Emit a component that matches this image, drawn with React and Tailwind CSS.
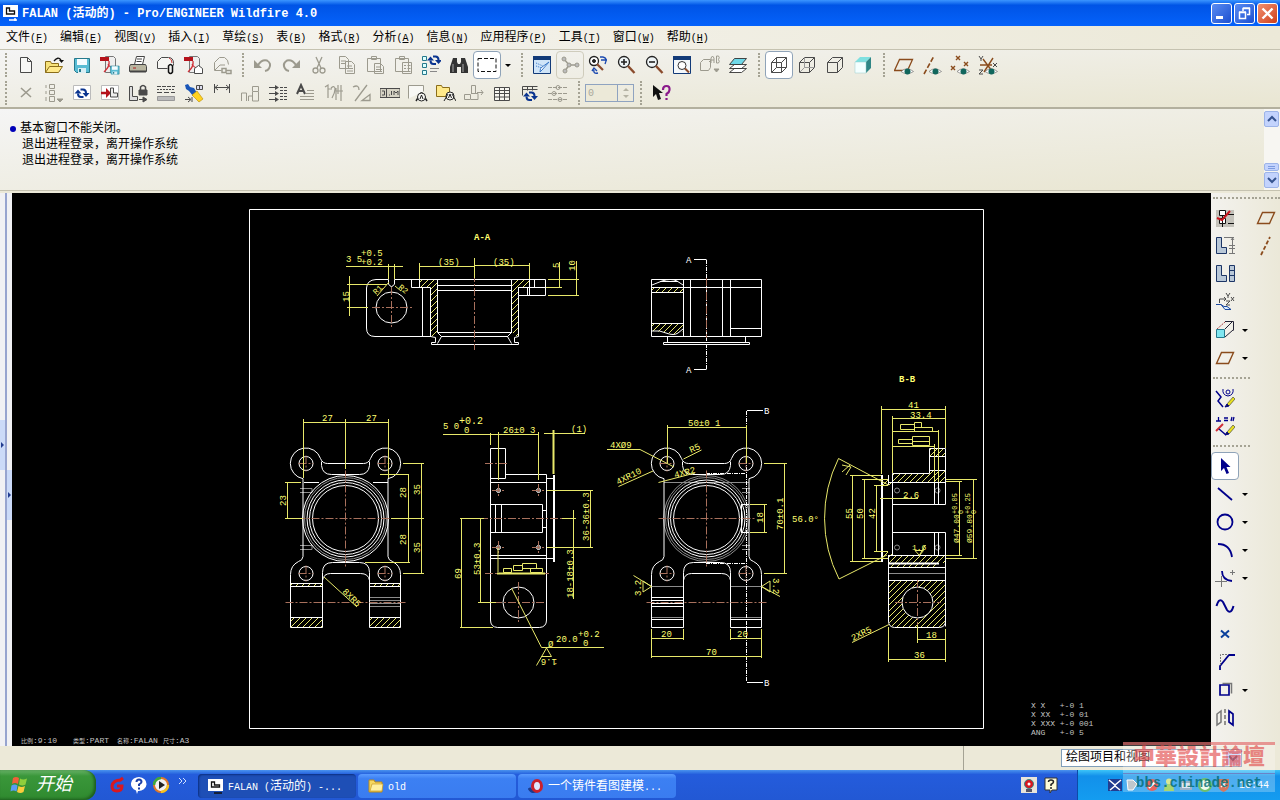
import React, { useState } from 'react';

const D = '#4a4a4a';
const G = '#9c9a8e';
const N = '#00008b';
const B = '#8a4b1c';

const mono = "font-['Liberation_Mono','Noto_Sans_CJK_SC',monospace]";

/* Small drawings shared by several icons */
const Eye = () => (
  <g>
    <path d="M7 16.500Q13 11 19.500 16.500Q13 21 7 16.500Z" fill="#fff" stroke="#777" strokeWidth="0.700" />
    <circle cx="13.500" cy="16.500" r="3" fill="#10665c" />
  </g>
);

const Sheet = ({ x = 0, y = 0, c = D }) => (
  <path d={`M${x + 4.5} ${y + 2.5}h7l4 4v11h-11zM${x + 11.5} ${y + 2.5}v4h4`} fill="#f8f8f6" stroke={c} />
);

const Pdf = () => (
  <g>
    <path d="M5.500 1.500h8l2 2v14h-10z" fill="#eee" stroke="#777" />
    <path d="M0 2h9v4H0z" fill="#b5121b" />
    <path d="M9 6C10 12 6 15 4 17M8 9q3 5 7 4" fill="none" stroke="#d03038" strokeWidth="1.300" />
  </g>
);

const Floppy = () => (
  <g>
    <path d="M2.500 3.500h15v14h-13l-2-2z" fill="#58bcd4" stroke="#26798c" />
    <path d="M5 4h10v6H5z" fill="#f4fcff" />
    <path d="M6 13h8v5H6z" fill="#d8eef4" />
    <path d="M7 14h2v3H7z" fill="#26798c" />
  </g>
);

const Sync = ({ x = 0, y = 0 }) => (
  <g transform={`translate(${x} ${y})`} fill="none" stroke="#0a3490" strokeWidth="2">
    <path d="M6 4.500h2.500q3 0 3 3.500M9 12H6.500q-3 0-3-3.500" />
    <path d="M8 8h7l-3.500 4zM7 8.500H0l3.500-4z" fill="#0a3490" stroke="none" />
  </g>
);

const Cube = ({ fill = 'none', hidden, c = D }) => (
  <g fill={fill} stroke={c}>
    <path d="M2.500 7.500h10v10h-10zM2.500 7.500l5-5h10v10l-5 5M12.500 7.500l5-5" />
    {hidden && <path d="M7.500 2.500v10h10M2.500 17.500l5-5" fill="none" stroke={hidden} />}
  </g>
);

const Lens = ({ sign }) => (
  <g fill="none" stroke="#222">
    <circle cx="8" cy="7" r="5.500" fill="#eef4f6" strokeWidth="1.300" />
    {sign && <path d={sign} strokeWidth="1.600" />}
    <path d="M12 11l6.500 7" stroke="#8a4b2c" strokeWidth="2.400" />
  </g>
);

const Pencil = () => (
  <g>
    <path d="M12 16l6-7 2 2-6 7z" fill="#e8e020" stroke="#333" strokeWidth="0.600" />
    <path d="M10 19l2-3 2 2z" fill="#222" />
  </g>
);

const icons = {
  new: <Sheet />,
  open: (
    <g>
      <path d="M1.500 17.500v-11h5l1 2h7v3" fill="#f7e27a" stroke="#8a6d1a" />
      <path d="M1.500 17.500l4-6h13l-4 6z" fill="#ffe98a" stroke="#8a6d1a" />
      <path d="M10 6q4-5 7-1" fill="none" stroke="#111" strokeWidth="1.300" />
      <path d="M15 5h5l-2.500 3z" fill="#111" />
    </g>
  ),
  save: <Floppy />,
  savePdf: (
    <g>
      <Pdf />
      <g transform="translate(9 9) scale(.58)"><Floppy /></g>
    </g>
  ),
  print: (
    <g stroke="#444">
      <path d="M6.500 9.500l2-8h8l-2 8" fill="#fff" />
      <path d="M9 4h5M8.500 6.500h5" />
      <path d="M2.500 9.500h15l1 2v5h-17v-5z" fill="#b8b5a0" />
      <path d="M2 16.500h16" strokeWidth="2" />
      <path d="M5 13h3" stroke="#b02020" />
    </g>
  ),
  mail: (
    <g fill="none" stroke={D}>
      <path d="M1.500 13.500v-7l4-4h7q5 0 5 6v2M1.500 13.500h10" fill="#f5f5f2" />
      <path d="M13 3q3 1 3 5" stroke="#d04040" />
      <path d="M12.500 11v6q2 3 4 0v-6q-2-3-4 0v5" stroke="#111" strokeWidth="1.500" />
    </g>
  ),
  mailPdf: (
    <g>
      <Pdf />
      <path d="M10.500 18.500v-5l4-3 4 3v5z" fill="#fff" stroke={D} />
    </g>
  ),
  mailLink: (
    <g fill="none" stroke={G}>
      <path d="M2.500 15.500v-8l5-5h5q4 2 4 7M2.500 15.500h7M3 15l5-5h5" />
      <path d="M10 13.500h4v4h-4zM14 15.500h5v3h-5" strokeWidth="1.500" />
    </g>
  ),
  undo: (
    <g fill="none" stroke={G} strokeWidth="2">
      <path d="M5 10Q9 4 14 5.500q5 3 2 8-1 2-4 2.500" />
      <path d="M1 5v8h8z" fill={G} stroke="none" />
    </g>
  ),
  redo: (
    <g fill="none" stroke={G} strokeWidth="2">
      <path d="M15 10Q11 4 6 5.500q-5 3-2 8 1 2 4 2.500" />
      <path d="M19 5v8h-8z" fill={G} stroke="none" />
    </g>
  ),
  cut: (
    <g fill="none" stroke={G} strokeWidth="1.300">
      <path d="M7 2l5 11M13 2L8 13" />
      <circle cx="6.500" cy="15.500" r="2.500" />
      <circle cx="13.500" cy="15.500" r="2.500" />
    </g>
  ),
  copy: (
    <g fill="#f1f0ea" stroke={G}>
      <path d="M2.500 1.500h6l3 3v9h-9zM8.500 6.500h6l3 3v9h-9z" />
      <path d="M4 6h5M4 8.500h4M10 11h5M10 13.500h6M10 16h6" />
    </g>
  ),
  paste: (
    <g fill="#f1f0ea" stroke={G}>
      <path d="M2.500 3.500h13v13h-13zM6.500 1.500h5v3h-5zM9.500 8.500h6l3 3v7h-9z" />
      <path d="M11 12h4M11 14.500h6M11 16.500h6" />
    </g>
  ),
  pasteSpecial: (
    <g fill="#f1f0ea" stroke={G}>
      <path d="M2.500 3.500h13v13h-13zM6.500 1.500h5v3h-5zM9.500 7.500h9v11h-9z" />
      <path d="M11 10.500h2M14.500 10.500h3M11 13.500h2M14.500 13.500h3M11 16.500h2M14.500 16.500h3" />
    </g>
  ),
  regen: (
    <g>
      <path d="M1.500 1.500h4v4h-4zM1.500 8.500h4v4h-4zM1.500 15.500h4v4h-4z" fill="#dff" stroke="#26798c" />
      <Sync x={6} y={-3} />
      <path d="M9 13.500h9M9 16.500h7" stroke="#888" />
    </g>
  ),
  find: (
    <g fill="#333">
      <path d="M4 3h4v4l1 2h2l1-2V3h4l3 9v6h-7v-6h-4v6H1v-6z" />
      <path d="M4 9v8M14 9v8" stroke="#aaa" />
    </g>
  ),
  select: <path d="M1 3.500h18v13H1z" fill="none" stroke="#111" strokeDasharray="4 2" />,
  repaint: (
    <g>
      <path d="M1.500 1.500h17v17h-17z" fill="#cfe4f8" stroke="#123a78" />
      <path d="M1 1h18v4H1z" fill="#123a78" />
      <path d="M4 8l7 3M4 11l6 2" stroke="#3a78c8" strokeDasharray="1 1" />
      <path d="M17 7l-7 8-2 2q0-4 2-5z" fill="#fff" stroke="#3a78c8" />
    </g>
  ),
  spin: (
    <g fill="#bbb" stroke={G}>
      <path d="M4 4l5 6h7M9 10l-4 6" fill="none" strokeWidth="1.500" />
      <circle cx="4" cy="4" r="2" /><circle cx="17" cy="10" r="2" /><circle cx="5" cy="16" r="2" /><circle cx="9" cy="10" r="2" />
    </g>
  ),
  orient: (
    <g fill="none" stroke="#222">
      <circle cx="6" cy="6" r="4.500" fill="#fff" strokeWidth="1.300" />
      <circle cx="6" cy="6" r="1.500" fill="#222" />
      <path d="M9 9l6 6" stroke="#8a4b2c" strokeWidth="2.200" />
      <path d="M12 2h3M13 5h6M15 2q5 1 2 7" stroke="#1b49b0" strokeWidth="1.400" />
      <path d="M10 18q-5 1-4-3M4 16l2-3 3 3" stroke="#1b49b0" strokeWidth="1.400" />
    </g>
  ),
  zoomIn: <Lens sign="M5 7h6M8 4v6" />,
  zoomOut: <Lens sign="M5 7h6" />,
  refit: (
    <g>
      <path d="M1.500 1.500h17v17h-17z" fill="#f4f8fb" stroke="#123a78" />
      <path d="M1 1h18v4H1z" fill="#123a78" />
      <circle cx="10" cy="10.500" r="4" fill="#fff" stroke="#333" />
      <path d="M13 13.500l4 4" stroke="#8a4b2c" strokeWidth="2" />
    </g>
  ),
  views: (
    <g fill="none" stroke={G}>
      <path d="M.500 7.500l3-3h7v8l-2 3h-8zM9 7l2-2" />
      <path d="M11 8V3l1.500-2L14 3v5M11 5h3M16.500 1v7h2q1.500-1.500 0-3.500 1.500-2 0-3.500z" />
      <path d="M14 14h5l-2.500 3z" fill={G} />
    </g>
  ),
  layers: (
    <g stroke="#333" strokeWidth="0.900">
      <path d="M1.500 17.500l5-4h12l-5 4zM1.500 13.500l5-4h12l-5 4z" fill="#fff" />
      <path d="M1.500 9.500l5-6h12l-5 6z" fill="#6fd8e8" />
    </g>
  ),
  wire: <Cube hidden={D} />,
  hiddenLine: <Cube hidden="#999" />,
  noHidden: <Cube />,
  shaded: (
    <g>
      <path d="M2 7l5-5h11l-5 5z" fill="#7fe0e0" />
      <path d="M13 7l5-5v11l-5 5z" fill="#2f8585" />
      <path d="M2 7h11v11H2z" fill="#f4ffff" stroke="#9cc" strokeWidth=".500" />
    </g>
  ),
  planeEye: <g><path d="M.500 15.500l5-11h13l-5 11z" fill="none" stroke={B} strokeWidth="1.300" /><Eye /></g>,
  axisEye: <g><path d="M2 19L12 1" stroke={B} strokeWidth="1.600" strokeDasharray="5 2" /><Eye /></g>,
  pointEye: <g><path d="M6 1l4 4M10 1l-4 4M14 7l4 4M18 7l-4 4M1 11l4 4M5 11l-4 4" stroke={B} strokeWidth="1.400" /><Eye /></g>,
  csysEye: (
    <g>
      <path d="M2 10h12M5 4l9 12M15 3L6 17" stroke={B} strokeWidth="1.400" />
      <path d="M1 1l2 3 2-3M3 4v2M15 8l4 4M19 8l-4 4M1 15h4l-4 4h4" stroke={D} fill="none" />
      <Eye />
    </g>
  ),

  del: <path d="M5 5l10 9M15 5L5 14" stroke={G} strokeWidth="1.600" />,
  modelTree: <g fill="none" stroke={G}><path d="M5.500 1.500h5v4h-5zM5.500 7.500h5v4h-5zM5.500 13.500h5v5h-5zM2 2v3M2 8v3M2 14v4" /><path d="M13 16h6l-3 3z" fill={G} /></g>,
  updateSheet: <g><path d="M1.500 2.500h17v14h-17z" fill="#fff" stroke="#bbb" /><Sync x={2.5} y={2} /></g>,
  insertView: <g><path d="M1.500 2.500h17v14h-17z" fill="#fff" stroke="#bbb" /><path d="M1 10h8" stroke="#b5121b" strokeWidth="2.500" /><path d="M6 5l5 5-5 5z" fill="#b5121b" /><path d="M10.500 5v9h7v-4h-4v-5z" fill="#eee" stroke={D} /></g>,
  lockView: <g fill="none" stroke={D}><path d="M1.500 3.500h3v10h5v4h-8z" fill="#ddd" /><path d="M11 7h8v5h-8z" fill={D} /><path d="M12.500 7v-3q2.500-3 5 0v3" strokeWidth="1.500" /><path d="M11 16.500h5" /><path d="M15 14l4 2.500-4 2.500z" fill={D} /></g>,
  lineStyle: <g stroke={D}><path d="M1 3.500h18" strokeDasharray="4 1" /><path d="M1 6.500h18" strokeDasharray="2 1" /><path d="M1 9.500h18" strokeDasharray="5 2" /><path d="M1.500 13.500h17v4h-17z" fill="#bbb" stroke="#999" /></g>,
  wrench: (
    <g>
      <path d="M1 2l3-1 2 3 4 1 3 5-4 3-4-5-3-2z" fill="#1956b8" />
      <path d="M8 12l5-4 6 8-4 3z" fill="#ffd21f" stroke="#b98a00" strokeWidth=".600" />
      <path d="M12.500 2.500h6v4h-6zM15.500 2.500v4" fill="#dde" stroke={D} />
      <path d="M1 16.500h5M4 14l3 2.500L4 19M8 14v5" fill="none" stroke={D} />
    </g>
  ),
  dim: <path d="M2.500 1v9M17.500 1v9M3 4.500h14M6 2L3 4.500 6 7M14 2l3 2.500L14 7" fill="none" stroke={D} />,
  align: <g fill="none" stroke={G}><path d="M1.500 18v-8h5v8M8.500 18v-5h4v5M12.500 3.500h6v5h-6zM12.500 9v9h6V9" /></g>,
  cleanup: <g stroke={D}><path d="M1 4.500h9M1 10.500h9M1 16.500h9" /><path d="M7 2l4 2.500L7 7zM7 8l4 2.500L7 13zM7 14l4 2.500L7 19z" fill={D} stroke="none" /><path d="M12 4.500h7M12 7.500h7M12 10.500h7M12 13.500h7M12 16.500h7" strokeDasharray="3 1" /></g>,
  note: <g><path d="M1 11L5 2l4 9M3 8h4" fill="none" stroke={D} strokeWidth="2" /><path d="M11 7.500h7M10 10.500h8M4 13.500h14M4 16.500h14" stroke={G} /></g>,
  jog: <g fill="none" stroke={G}><path d="M1 4l3-2v4h4M4 6v9M7 5q4-3 4 1t-3 9M12 5v12M14 2v9M17 2v16M12 8h7" strokeWidth="1.200" /></g>,
  slash: <g fill="none" stroke={G} strokeWidth="1.300"><path d="M1 4q6-3 6 3M3 18L15 2M10 17.500h8v-6z" /></g>,
  tol: <g fill="#d6d3c4" stroke={D}><path d="M0 5.500h20v9H0zM6.500 5.500v9" /><path d="M2 8h2.500v4H2M9 12h1M11.500 8v4M14 12V8l2 2 2-2v4" fill="none" /></g>,
  symbol: <g fill="#f8f8f4" stroke={G}><path d="M.500 15.500v-13h15v6" /><path d="M8 18l5-8h1l5 8" stroke="#222" strokeWidth="1.500" /><circle cx="13.500" cy="14" r="4" stroke="#222" /><path d="M12 16l1.500-4 1.500 4" stroke="#222" fill="none" /></g>,
  symbolDir: <g stroke="#8a6d1a"><path d="M.500 13.500v-11h5l1 2h7v9z" fill="#ffe98a" /><circle cx="14" cy="13" r="4" stroke="#222" fill="#f8f8f4" /><path d="M8 18l4-7M20 18l-4-7M12.500 15l1.500-4 1.500 4" stroke="#222" fill="none" /></g>,
  leader: <g fill="none" stroke={G}><path d="M7.500 2.500h4v8h-4zM.500 11.500h6v5h-6zM7 16.500h7v-6h-7M13 9.500h6M17 7l2 2.500-2 2.500" /></g>,
  table: <path d="M2.500 4.500h15v13h-15zM2.500 7.500h15M2.500 10.500h15M2.500 14h15M7.500 4.500v13M12.500 4.500v13" fill="#f7f6f0" stroke={D} />,
  tableUpd: <g><path d="M2.500 3.500h15M2.500 6.500h15M2.500 3.500v9M7.500 3.500v4M12.500 3.500v4" fill="none" stroke={D} /><Sync x={3} y={5} /></g>,
  sliders: <g fill="none" stroke={G}><path d="M0 4.500h20M0 10.500h20M0 16.500h20" strokeDasharray="4 1" /><circle cx="10" cy="4.500" r="2" /><circle cx="6" cy="10.500" r="2" /><circle cx="12" cy="16.500" r="2" /></g>,
  help: <g><path d="M2 2v12l3-3 2 6 3-1-2-6h4z" fill="#111" /><path d="M12 7q0-4 3.500-4T18.500 7q0 2-3 4v2M15.500 15v2" fill="none" stroke="#8b1a8b" strokeWidth="2.200" /></g>,

  tree: <g><path d="M1 2h18v17H1z" fill="#c4c2ba" /><path d="M4.500 2.500h6v5h-6zM4.500 10.500h6v5h-6zM7.500 8v11" fill="#fff" stroke="#111" /><path d="M13 6.500h6M13 15.500h6" stroke="#111" /><path d="M2 10l5 2 8-9" fill="none" stroke="#c8141c" strokeWidth="2" /></g>,
  lDim: <g><path d="M1.500 1.500h5v10h5v6h-10z" fill="#b9c8d8" stroke="#1c3566" /><path d="M9 1.500h10M17.500 1v17M14 9.500h6M14 12.500h6M14 17.500h6M16 4l1.500-2L19 4" fill="none" stroke="#777" /></g>,
  lBox: <g fill="#b9c8d8" stroke="#1c3566"><path d="M1.500 1.500h5v10h5v6h-10zM14.500 1.500h5v16h-5zM14.500 6.500h5M14.500 11.500h5" /></g>,
  csys: <g fill="none" stroke={D}><path d="M4.500 11v-4h6M9 5l2 2-2 2M11 1l2 3 2-3M13 4v2M16 5l3 4M19 5l-3 4M11 9h4l-4 4h4" /><path d="M1 12.500h5l4 5h6l-4-3H9l-3-2" fill="#d8ecff" stroke="#1c49a0" /></g>,
  isoCube: <g fill="none" stroke={D}><path d="M10 17l8-7M10 9l7-7M10 1.500h8.500v9" stroke="#223" /><path d="M2 9l8-7" stroke="#a44" strokeDasharray="2 1" /><path d="M1.500 9.500h8v8h-8z" fill="#7fe6f0" stroke="#26798c" /></g>,
  plane: <path d="M1.500 15.500l5-11h12l-5 11z" fill="none" stroke={B} strokeWidth="1.400" />,
  axis: <path d="M5 19L14 1" stroke={B} strokeWidth="1.800" strokeDasharray="4 2" />,
  sketchRef: <g fill="none" stroke={N}><path d="M1 3l5 6-3 4 5 6" strokeWidth="1.500" /><circle cx="13" cy="4" r="2" /><path d="M8 1q-1 6 5 7 6-1 5-7" /><Pencil /></g>,
  constrain: <g fill="none" stroke={N}><path d="M3.500 1v4M1 5h5M9 2h4M9 4.500h4M16 5l1-4M18 5l1-4" strokeWidth="1.300" /><path d="M1 15l7-7" stroke="#d03038" strokeWidth="2" /><path d="M4 13l7 6" strokeWidth="1.500" /><Pencil /></g>,
  pointer: <path d="M6 2v13l3-3 2.500 6 2.500-1-2.500-6h4z" fill={N} />,
  line: <path d="M3 4l14 12" stroke={N} strokeWidth="1.800" />,
  circle: <circle cx="10" cy="10" r="7.500" fill="none" stroke={N} strokeWidth="1.800" />,
  arc: <path d="M3 4q12 0 14 13" fill="none" stroke={N} strokeWidth="1.800" />,
  fillet: <g fill="none"><path d="M7 3q0 9 10 10" stroke={N} strokeWidth="1.800" /><path d="M0 13.500h12M6.500 8v11M15 4.500h5M17.500 2v5" stroke="#777" /></g>,
  spline: <path d="M1.500 10Q4 1 8 6L12 14Q16 19 18.500 10" fill="none" stroke={N} strokeWidth="2" />,
  point: <path d="M6 6.500l8 7M14 6.500l-8 7" stroke="#0a3f9b" strokeWidth="2" fill="none" />,
  chamfer: <g fill="none"><path d="M5 18v-4L14 3h6" stroke={N} strokeWidth="1.800" /><path d="M5.500 13V2.500h8" stroke="#777" strokeDasharray="2 1" /></g>,
  edge: <g fill="none"><path d="M7.500 3.500h9v10" stroke="#777" strokeWidth="1.500" /><path d="M5 5h9v10H5z" stroke={N} strokeWidth="1.700" /></g>,
  mirror: <g fill="none"><path d="M2 6l4-3v11l-4 3z" stroke="#777" strokeWidth="1.500" /><path d="M10 1v18" stroke="#333" strokeDasharray="4 2" /><path d="M14 3l4 3v11l-4-3z" stroke={N} strokeWidth="1.700" /></g>,
};

const Icon = ({ name }) => (
  <svg viewBox="0 0 20 20" className="w-5 h-5" aria-hidden="true">{icons[name]}</svg>
);

const ToolButton = ({ name, active, framed, onClick }) => (
  <button
    type="button"
    aria-label={name}
    onClick={onClick}
    className={`flex items-center justify-center w-7 h-7 shrink-0 ${
      active ? 'bg-white border border-[#8fa3b8] rounded-sm' : framed ? 'border border-[#cfccbc] rounded-sm' : ''
    }`}
  >
    <Icon name={name} />
  </button>
);

const Grip = () => (
  <span className="flex justify-center w-[13px] shrink-0">
    <span className="h-6 border-l-2 border-dotted border-[#a5a394]" />
  </span>
);

const Caret = () => (
  <span className="border-x-[3px] border-x-transparent border-t-[3px] border-t-black" />
);

const row1 = [
  ['new', 'open', 'save', 'savePdf', 'print', 'mail', 'mailPdf', 'mailLink'],
  ['undo', 'redo', 'cut', 'copy', 'paste', 'pasteSpecial', 'regen', 'find', 'select'],
  ['repaint', 'spin', 'orient', 'zoomIn', 'zoomOut', 'refit', 'views', 'layers'],
  ['wire', 'hiddenLine', 'noHidden', 'shaded'],
  ['planeEye', 'axisEye', 'pointEye', 'csysEye'],
];

const row2 = [
  'del', 'modelTree', 'updateSheet', 'insertView', 'lockView', 'lineStyle', 'wrench', 'dim', 'align', 'cleanup',
  'note', 'jog', 'slash', 'tol', 'symbol', 'symbolDir', 'leader', 'table', 'tableUpd', 'sliders',
];

const sideGroups = [
  [['tree'], ['lDim'], ['lBox'], ['csys'], ['isoCube', true], ['plane', true]],
  [['sketchRef'], ['constrain']],
  [
    ['pointer'], ['line', true], ['circle', true], ['arc', true], ['fillet', true],
    ['spline'], ['point'], ['chamfer'], ['edge', true], ['mirror'],
  ],
];

const menus = [
  ['文件', 'F'], ['编辑', 'E'], ['视图', 'V'], ['插入', 'I'], ['草绘', 'S'], ['表', 'B'], ['格式', 'R'],
  ['分析', 'A'], ['信息', 'N'], ['应用程序', 'P'], ['工具', 'T'], ['窗口', 'W'], ['帮助', 'H'],
];

const TitleBar = () => (
  <header className="flex items-center h-[26px] shrink-0 pl-[3px] pr-[2px] bg-linear-to-b from-[#3b95ff] via-[#0054e6] via-20% to-[#0562fb]">
    <svg viewBox="0 0 16 16" className="w-4 h-4" aria-hidden="true">
      <path d="M0 0h15v12H0z" fill="#fff" />
      <path d="M3.500 3v6h8v-3h-5v-3z" fill="#fff" stroke="#111" strokeWidth="1.300" />
      <path d="M6 15h8M12 13v3" stroke="#fff" strokeWidth="1.500" />
    </svg>
    <h1 className={`ml-[3px] pt-px text-xs font-bold text-white whitespace-pre ${mono}`}>
      FALAN (活动的) - Pro/ENGINEER Wildfire 4.0
    </h1>
    <div className="flex gap-[2px] ml-auto">
      <button type="button" aria-label="最小化" className="flex w-[21px] h-[21px] border border-white rounded-[3px] bg-linear-to-br from-[#5b8cf2] to-[#1c4ed0]">
        <svg viewBox="0 0 19 19" className="w-full h-full"><path d="M4 12h7v3H4z" fill="#fff" /></svg>
      </button>
      <button type="button" aria-label="还原" className="flex w-[21px] h-[21px] border border-white rounded-[3px] bg-linear-to-br from-[#5b8cf2] to-[#1c4ed0]">
        <svg viewBox="0 0 19 19" className="w-full h-full" fill="none" stroke="#fff" strokeWidth="1.500">
          <path d="M4.500 8.500h6v6h-6zM4 8h7M8 7V4.500h6.500v6H12M8 4h7" />
        </svg>
      </button>
      <button type="button" aria-label="关闭" className="flex w-[21px] h-[21px] border border-white rounded-[3px] bg-linear-to-br from-[#f09070] to-[#cf3c14]">
        <svg viewBox="0 0 19 19" className="w-full h-full"><path d="M4.500 4.500l10 10M14.500 4.500l-10 10" stroke="#fff" strokeWidth="2.400" /></svg>
      </button>
    </div>
  </header>
);

/* Outline used by both front views, origin at the bore centre */
const Bracket = () => (
  <g>
    <path d="M-42.500 -39.800A15.500 15.500 0 1 1 -25 -60Q-23 -55 -18 -55H18Q23 -55 25 -60A15.500 15.500 0 1 1 42.500 -39.800V38Q43 42 47 43Q55 47 55 56V109H24V54Q24 44 14 44H-13Q-23 44 -23 54V109H-55V56Q-55 47 -47 43Q-43 42 -42.500 38Z" />
    <path d="M-24 -57V-53Q-23 -44 -14 -44H14Q23 -44 24 -53V-57M-23 62Q-22 55 -15 55H15Q23 55 24 62" />
    <circle cx="-39.500" cy="-55" r="7" /><circle cx="39.500" cy="-55" r="7" />
    <circle cx="-39.500" cy="55" r="7" /><circle cx="39.500" cy="55" r="7" />
    <circle r="38.500" /><circle r="36" /><circle r="33" />
  </g>
);

const BracketAxes = () => (
  <path d="M-48 0H48M0 -48V48M-47 -55H-32M-39.500 -63V-47M32 -55H47M39.500 -63V-47M-47 55H-32M-39.500 47V63M32 55H47M39.500 47V63M-60 84H60" />
);

/* x, y, text, rotation, size */
const dims = [
  [346, 262, '3 5', 0, 9], [361, 256, '+0.5', 0, 9], [361, 265, '+0.2', 0, 9],
  [438, 265, '(35)', 0, 9], [493, 265, '(35)', 0, 9], [349, 302, '15', -90, 9], [559, 268, '5', -90, 9], [575, 271, '10', -90, 9],
  [376, 295, 'R1', -45, 8], [398, 288, 'R2', 40, 8],
  [322, 421, '27', 0, 9], [366, 421, '27', 0, 9], [286, 506, '23', -90, 9],
  [406, 498, '28', -90, 9], [406, 545, '28', -90, 9], [420, 495, '35', -90, 9], [420, 553, '35', -90, 9], [342, 592, '8XR5', 45, 9],
  [443, 429, '5 0', 0, 9], [459, 424, '+0.2', 0, 10], [464, 433, '0', 0, 9], [503, 433, '26±0 3', 0, 9], [571, 432, '(1)', 0, 9],
  [461, 579, '69', -90, 9], [480, 575, '53±0.3', -90, 9], [589, 541, '36-36±0.3', -90, 9], [573, 598, '18-18±0.3', -90, 9],
  [548, 647, 'Ø', 0, 9], [556, 642, '20.0', 0, 9], [578, 637, '+0.2', 0, 9], [583, 646, '0', 0, 9], [557, 659, '1.6', 180, 9],
  [688, 426, '50±0 1', 0, 9], [610, 448, '4XØ9', 0, 9], [691, 453, 'R5', -25, 9], [618, 485, '4XR10', -27, 9], [675, 478, '4XR2', -15, 9],
  [763, 523, '18', -90, 9], [783, 530, '70±0.1', -90, 9], [792, 522, '56.0°', 0, 9], [641, 596, '3.2', -90, 9], [773, 578, '3.2', 90, 9],
  [661, 637, '20', 0, 9], [737, 637, '20', 0, 9], [706, 655, '70', 0, 9],
  [908, 408, '41', 0, 9], [910, 418, '33.4', 0, 9], [903, 498, '2.6', 0, 9], [912, 550, '1.6', 0, 8],
  [852, 519, '55', -90, 9], [863, 519, '50', -90, 9], [875, 519, '42', -90, 9],
  [959, 543, 'Ø47.00', -90, 8], [957, 514, '+0.05', -90, 7], [963, 514, '0', -90, 7],
  [972, 543, 'Ø59.80', -90, 8], [970, 514, '+0.25', -90, 7], [976, 514, '0', -90, 7],
  [853, 641, '2XR5', -27, 9], [926, 638, '18', 0, 9], [914, 658, '36', 0, 9],
];

const Drawing = () => (
  <svg
    viewBox="12 193 1199 553"
    className={`flex-1 min-w-0 min-h-0 bg-black ${mono}`}
    fill="none"
    role="img"
    aria-label="FALAN"
  >
    <defs>
      <pattern id="hatch" width="6" height="6" patternUnits="userSpaceOnUse">
        <path d="M-1 7L7 -1M-1 1L1 -1M5 7L7 5" stroke="#e8e86a" strokeWidth="1" />
      </pattern>
    </defs>

    <path d="M249.500 209.500H983.500V728.500H249.500Z" stroke="#fff" />

    {/* hatched cuts */}
    <g fill="url(#hatch)" stroke="none">
      <path d="M419 280h18v52l-3 4h-4v-49h-11zM512 280h18v7h-11v49h-4l-3-4z" />
      <path d="M652 287h31v6h-31zM652 324h31v7l-6 4-12-3-13-1z" />
      <path d="M291 584h31v3h-31zM370 584h30v3h-30zM291 618h31v10h-31zM370 618h30v10h-30z" />
      <path d="M893 474h37v8h-37zM930 448h15v8h-15zM930 470h15v12h-15zM889 556h56v7h-56zM889 564h50v3h-50zM882 552h10v5h-10zM882 480h10v5h-10z" />
      <path fillRule="evenodd" d="M889 581h56v40q0 6-6 6h-44q-6 0-6-6zM933 602.500a15.500 15.500 0 1 0-31 0 15.500 15.500 0 1 0 31 0z" />
    </g>

    <g stroke="#8c8c8c">
      <circle cx="345.500" cy="518.500" r="41" /><circle cx="706.500" cy="518.500" r="41" /><circle cx="706.500" cy="518.500" r="43" />
      <path d="M300 488.500h12v4h-12M300 545.500h12v4h-12M370 597.500h30M370 600.500h30M370 603.500h30M370 606.500h30" />
      <path d="M652 586.500h31M731 586.500h30M652 617.500h31M731 617.500h30M664 482.500h85M742 488.500h8M742 492.500h8M742 545.500h8M742 549.500h8M889 573.500h56" />
      <circle cx="897" cy="490.500" r="2.500" /><circle cx="937.500" cy="490.500" r="2.500" /><circle cx="897" cy="547.500" r="2.500" /><circle cx="937.500" cy="547.500" r="2.500" />
    </g>

    <g stroke="#fff">
      {/* section A-A */}
      <path d="M431 336.500H375Q366.500 336.500 366.500 328V288Q367 280 376 279.500H388.500V284Q391.500 289 394.500 284V279.500H545.500V295.500H518.500" />
      <circle cx="391.500" cy="307.500" r="15.500" />
      <path d="M411.500 279.500v8h19M419.500 279.500v8M422.500 287v49.500M430.500 287.500v49M437.500 279.500v53M437 285.500h75M437 290.500h75M438 332.500h74M441 336.500h67M511.500 279.500v53M518.500 295.500v41M518.500 287.500v8M529.500 279.500v16M527.500 288v7M534.500 279.500v8M518 287.500h27" />
      <path d="M437.500 332.500l4 4-4 7M430.500 336.500l5 1v5h-4v2h87v-2h-4v-5l4-1M511.500 332.500l-4 4 4 7" />
      {/* top view */}
      <path d="M651.500 279.500h110v57h-110zM683.500 280v56M690.500 280v56M722.500 280v56M730.500 280v56M652 287.500h110M652 292.500h31M652 323.500h31M731 328.500h30" />
      <path d="M652 285l10-4q9-3 15 0l6 4M660 281.500h18M652 331q8-1 14 2 8 3 12 0l5-4M667.500 337v5M745.500 337v5M663.500 342.500h86v2h-86z" />
      <path d="M694 259.500h12.500M694 369.500h12.500M747 410.500h16M747 682.500h16" />
      <path d="M706.500 260v110M746.500 411v271M706 473.500h40M706 563.500h40" strokeDasharray="4 1 1 1" />
      {/* front views */}
      <g transform="translate(345.500 518.500)"><Bracket /><circle r="43" /></g>
      <g transform="translate(706.500 518.500)"><Bracket /></g>
      <path d="M304 482.500h15M373 482.500h15M291 583.500h31M291 586.500h31M370 583.500h30M370 586.500h30M291 617.500h31M370 617.500h30" />
      <path d="M652 597.500h31M652 600.500h31M652 603.500h31M652 606.500h31M652 619.500h31M731 619.500h30M741 504.500h8M741 532.500h8M741.500 504v28" />
      {/* side view */}
      <path d="M490.500 448.500h15v30M490.500 448.500V620q0 7 7 7.500h42q7-.500 7-7.500V474.500h-41M490.500 478.500h15M490.500 482.500h56M546 478.500h8M490.500 555.500h56M490.500 558.500h63" />
      <path d="M490.500 504.500h52v28h-52M495.500 504v28M501.500 504v28M542.500 510.500h4M542.500 527.500h4" />
      <path d="M554 475v87M882 475v87" strokeWidth="2" />
      <circle cx="498.500" cy="490.500" r="2" /><circle cx="538.500" cy="490.500" r="2" /><circle cx="498.500" cy="547.500" r="2" /><circle cx="538.500" cy="547.500" r="2" />
      <circle cx="518.500" cy="602.500" r="15.500" />
      {/* section B-B */}
      <path d="M892.500 473.500v82M892.500 473.500h37M929.500 448.500h16v56h-53M929.500 448.500v25M930 456.500h15M930 470.500h15M889 482.500h56M888.500 475v10M934.500 483v21M938.500 483v21M892.500 532.500h53v94M934.500 533v22M938.500 533v22M889 555.500h56" />
      <path d="M888.500 555v66q0 6 6 6.500h45q6-.500 6-6.500M889 567.500h56M889 580.500h56" />
      <path d="M889 563.500h50" strokeWidth="2" />
      <circle cx="917.500" cy="602.500" r="15.500" />
    </g>

    <g stroke="#a8705c" strokeDasharray="8 2 2 2">
      <path d="M372 307.500h40M391.500 287v42M474.500 260v90M706.500 278v60M480 518.500h82M494 602.500h50M518.500 582v40M895 602.500h46M917.500 580v45" />
      <path d="M485 463.500h24M485 573.500h66M492 490.500h12M532 490.500h12M492 547.500h12M532 547.500h12M498.500 484v14M538.500 484v14M498.500 541v12M538.500 541v12" />
      <g transform="translate(345.500 518.500)"><BracketAxes /></g>
      <g transform="translate(706.500 518.500)"><BracketAxes /></g>
    </g>

    <g stroke="#e8e86a">
      <path d="M346 266.500h57M388.500 264v15M394.500 264v15M419.500 263v16M419 266.500h55M474.500 258v20M474 265.500h56M529.500 263v16M347 284.500h40M347 307.500h21M349.500 276v40M377 296l12-14M395 286l6 5" />
      <path d="M548 279.500h31M548 295.500h31M546 287.500h16M559.500 262v26M576.500 261v35" />
      <path d="M303 422.500h86M303.500 419v59M345.500 419v50M388.500 419v59M285 482.500h16M285 518.500h18M287.500 482v37M403 463.500h21M380 474.500h29M365 562.500h45M403 573.500h21M391 518.500h33M408.500 474v88M421.500 463v110M324 577l33 30" />
      <path d="M443 434.500h96M490.500 433v12M498.500 432v48M538.500 432v48M544 433.500h41M547 490.500h46M547 547.500h46M590.500 490v58M562 518.500h14M573.500 510v89M460 518.500h24M478 602.500h18M460 627.500h33M461.500 518v110M480.500 518v85" />
      <path d="M553.500 430v44M497 573.500h48" strokeWidth="2" />
      <path d="M503.500 568.500h8v4h-8zM513.500 565.500h9v5h-9zM522.500 563.500h14v5h-14zM530.500 568.500h12v4h-12zM498 548v24" />
      <path d="M511.500 588L541.500 647.500H604M536.500 665.500l10-17.500 5 8.500h-10" />
      <path d="M667 427.500h80M667.500 425v38M746.500 425v38M607 449.500h33L674 467M683.500 459l18-9M618.500 486.500L653 471M658.500 482.500L695 473" />
      <path d="M750 504.500h17M750 532.500h17M764.500 504v29M764 463.500h23M764 573.500h23M784.500 463v111M633.500 575.500l18 11-8.500-5.500v11l8.500-5.500M780 596.500l-18.500-10 8.500-5.500v11l-8.500-5.500" />
      <path d="M651.500 629v29M683.500 629v11M730.500 629v11M761.500 629v29M651 638.500h33M730 638.500h32M651 656.500h111" />
      <path d="M838.500 458.500A135 135 0 0 0 839 579L887 555M838.500 458.500L888.500 485M842 472l8-7M846 475l5-8-9-2" />
      <path d="M852.500 476v86M864.500 479v80M876.500 485v67M850 475.500h31M862 479.500h26M874 485.500h14M850 561.500h31M862 558.500h26M874 551.500h14" />
      <path d="M881 409.500h65M881.500 406v68M945.500 406v42M892 418.500h53M892.500 416v57M892 431.500h47M892 446.500h43M938.500 430v52M934.500 444v38M900.500 424.500h14v5h-14zM914.500 422.500h7v5h-7zM914.500 427.500h18v4h-18zM898.500 439.500h14v4h-14zM912.500 436.500h17v9h-17zM913 441.500h16" />
      <path d="M880 498.500h38M915 550.500h8.500l-4 5zM919.500 555l6-10M946 481.500h16M946 555.500h16M946 479.500h31M946 558.500h31M959.500 481v75M973.500 479v80" />
      <path d="M852 642.500l37-18M917.500 625v18M917 639.500h29M888.500 627v35M945.500 629v33M888 659.500h58" />
    </g>

    <g fill="#ffff70">
      {dims.map(([x, y, t, r, s], i) => (
        <text key={i} x={x} y={y} fontSize={s} transform={`rotate(${r} ${x} ${y})`}>{t}</text>
      ))}
      <text x="474" y="240" fontSize="9" fontWeight="bold">A-A</text>
      <text x="899" y="382" fontSize="9" fontWeight="bold">B-B</text>
    </g>
    <g fill="#fff" fontSize="9">
      <text x="686" y="263">A</text>
      <text x="686" y="373">A</text>
      <text x="764" y="414">B</text>
      <text x="764" y="686">B</text>
    </g>
    <g fill="#c0c0c0" fontSize="8">
      <text x="21" y="743"><tspan fontSize="6">比例</tspan>:9:10</text>
      <text x="73" y="743"><tspan fontSize="6">类型</tspan>:PART</text>
      <text x="117" y="743"><tspan fontSize="6">名称</tspan>:FALAN</text>
      <text x="163" y="743"><tspan fontSize="6">尺寸</tspan>:A3</text>
      <text x="1031" y="708" className="whitespace-pre">X X   +-0 1</text>
      <text x="1031" y="717" className="whitespace-pre">X XX  +-0 01</text>
      <text x="1031" y="726" className="whitespace-pre">X XXX +-0 001</text>
      <text x="1031" y="735" className="whitespace-pre">ANG   +-0 5</text>
    </g>
  </svg>
);

const SideBar = ({ tool, setTool }) => (
  <aside className="flex w-[69px] shrink-0 pt-1 bg-linear-to-r from-[#f3f2ee] to-[#ebe8d8]">
    <div className="w-[41px]">
      {sideGroups.map((group, i) => (
        <div key={i}>
          <div className={`flex mx-0.5 ${i === 0 ? 'h-[7px]' : 'h-3 items-center'}`}>
            <span className="w-full border-t-2 border-dotted border-[#a5a394]" />
          </div>
          {group.map(([name, more]) => (
            <div key={name} className="flex items-center">
              <ToolButton name={name} active={tool === name} onClick={() => setTool(name)} />
              {more && (
                <button type="button" aria-label={`${name} 更多`} className="flex items-center justify-center w-3 h-7">
                  <Caret />
                </button>
              )}
            </div>
          ))}
        </div>
      ))}
    </div>
    <div className="flex-1">
      <div className="h-[7px] flex"><span className="w-full border-t-2 border-dotted border-[#a5a394]" /></div>
      <ToolButton name="plane" onClick={() => setTool('plane')} />
      <ToolButton name="axis" onClick={() => setTool('axis')} />
    </div>
  </aside>
);

const Splitter = ({ label, place }) => (
  <button
    type="button"
    aria-label={label}
    className={`flex items-center justify-center w-[5px] h-[50px] bg-[#cbdaf8] ${place}`}
  >
    <svg viewBox="0 0 5 6" className="w-[5px] h-1.5"><path d="M1 0l3 3-3 3z" fill="#223c90" /></svg>
  </button>
);

const Task = ({ active, icon, children }) => (
  <button
    type="button"
    className={`flex items-center gap-1 w-[158px] h-6 pl-2.5 rounded-sm text-white whitespace-nowrap overflow-hidden ${
      active ? 'bg-[#1e4fb6] shadow-[inset_1px_1px_2px_#0c2f80]' : 'bg-linear-to-b from-[#5a9bff] via-[#3c80f3] via-20% to-[#3a7cf0]'
    }`}
  >
    {icon}
    <span className="pt-0.5 text-xs">{children}</span>
  </button>
);

const TaskBar = () => (
  <footer className="flex items-stretch h-[30px] shrink-0 bg-linear-to-b from-[#4a92ee] via-[#245cdc] via-15% to-[#2258d4]">
    <button type="button" className="flex items-center w-24 pl-[10px] gap-1.5 rounded-r-xl bg-linear-to-b from-[#66b266] via-[#3a973a] via-20% to-[#2f8a2f] shadow-[inset_-2px_-1px_3px_#1d5c1d]">
      <svg viewBox="0 0 20 20" className="w-5 h-5" aria-hidden="true">
        <path d="M3 3q3-2 6 0l-1 6q-3-2-6 0z" fill="#f0603a" />
        <path d="M10 3.500q3 2 7 0l-1.500 6q-3 2-6.500 0z" fill="#8fcf3c" />
        <path d="M1.500 10.500q3-2 6 0l-1 6q-3-2-6 0z" fill="#5a9cf4" />
        <path d="M8.500 11q3 2 6.500 0l-1.500 6q-3 2-6.500 0z" fill="#fbcc3c" />
      </svg>
      <span className="text-lg leading-5 italic text-white">开始</span>
    </button>
    <nav className="flex items-center gap-1 pl-3 w-[102px]" aria-label="快速启动">
      <button type="button" aria-label="浏览器">
        <svg viewBox="0 0 18 18" className="w-[18px] h-[18px]"><path d="M13 4Q5 4 4 10q0 5 5 5 5 0 5-5H9M15 2l-4 3" fill="none" stroke="#d81820" strokeWidth="3" /></svg>
      </button>
      <button type="button" aria-label="帮助">
        <svg viewBox="0 0 18 18" className="w-[18px] h-[18px]">
          <path d="M9 1a8 7 0 1 1-1 14l-1 3-1-3.500A8 7 0 0 1 9 1z" fill="#fff" />
          <path d="M6.500 6q0-2.500 2.500-2.500T11.500 6Q11.500 7 9 8.500V10M9 11.500v2" fill="none" stroke="#1b3fa8" strokeWidth="2" />
        </svg>
      </button>
      <button type="button" aria-label="播放器">
        <svg viewBox="0 0 18 18" className="w-[18px] h-[18px]">
          <circle cx="9" cy="9" r="7" fill="#f2f2f2" stroke="#e07828" strokeWidth="2" />
          <path d="M2 9a7 7 0 0 1 7-7" stroke="#3ca83c" strokeWidth="2.500" fill="none" />
          <path d="M16 9a7 7 0 0 1-7 7" stroke="#f4c420" strokeWidth="2.500" fill="none" />
          <path d="M7 5l6 4-6 4z" fill="#222" />
        </svg>
      </button>
      <svg viewBox="0 0 10 10" className="w-2.5 h-2.5 mb-2 ml-1" fill="none" stroke="#cfe0ff"><path d="M1 2l3 3-3 3M5 2l3 3-3 3" /></svg>
    </nav>
    <div className="flex items-center gap-0.5 pt-0.5">
      <Task active icon={
        <svg viewBox="0 0 16 16" className="w-4 h-4"><path d="M0 1h15v12H0z" fill="#fff" /><path d="M3.500 4v5h8v-2h-5v-3zM6 15h8" fill="none" stroke="#111" strokeWidth="1.300" /></svg>
      }>
        <span className="text-[10px]">FALAN (</span>活动的<span className="text-[10px]">) -...</span>
      </Task>
      <Task icon={
        <svg viewBox="0 0 16 16" className="w-4 h-4"><path d="M1 14V2h5l1 2h7v10z" fill="#f6d860" stroke="#b98a1c" /><path d="M2 13l2-7h11l-1 7z" fill="#fff0a0" stroke="#c89c28" strokeWidth=".700" /></svg>
      }>
        <span className="text-[10px]">old</span>
      </Task>
      <Task icon={
        <svg viewBox="0 0 16 16" className="w-4 h-4"><path d="M1 10q3 5 7 3" stroke="#1b3c90" strokeWidth="3" fill="none" /><ellipse cx="9" cy="8" rx="4.500" ry="5.500" fill="#dfe8ff" stroke="#c8202c" strokeWidth="3" /></svg>
      }>
        一个铸件看图建模<span className="text-[10px]">...</span>
      </Task>
    </div>
    <div className="flex items-center gap-1.5 ml-auto mr-[18px]">
      <svg viewBox="0 0 16 16" className="w-4 h-4"><path d="M0 0h16v16H0z" fill="#e8e4da" /><path d="M5 12h6v3H5z" fill="#556" /><circle cx="8" cy="7" r="4.500" fill="#d81820" stroke="#3a8a8a" /><circle cx="8" cy="7" r="1.500" fill="#fff" /></svg>
      <svg viewBox="0 0 16 16" className="w-4 h-4"><path d="M2 1h12v12H9l-2 3v-3H2z" fill="#fffbd8" stroke="#333" /><path d="M5.500 5q0-2 2.500-2t2.500 2q0 1-2.500 2.500v1.500M8 10v2" fill="none" stroke="#222" strokeWidth="1.500" /></svg>
    </div>
    <div className="flex items-center justify-end w-[203px] pr-[11px] gap-0.5 border-l border-[#0c4ca8] bg-linear-to-b from-[#3cc4f8] via-[#1290ea] via-20% to-[#149cf0]">
      <svg viewBox="0 0 124 16" className="w-[124px] h-4" aria-hidden="true">
        <path d="M1 2h14v12H1z" fill="#223c90" /><path d="M2 3l6 5 6-5M3 13l5-4 5 4" fill="none" stroke="#fff" strokeWidth="1.500" />
        <path d="M20 3h6l4 4-4 6h-5z" fill="#aab4bc" stroke="#fff" />
        <circle cx="45" cy="8" r="6" fill="#e03028" /><path d="M42 11l6-6" stroke="#fff" strokeWidth="2" />
        <circle cx="62" cy="4.500" r="3" fill="#c8e070" /><path d="M57 14q0-7 5-7t5 7z" fill="#8cc83c" />
        <path d="M73 4h12v9H73z" fill="#7a98b8" /><path d="M75 6h8v5h-8z" fill="#cfe0f0" />
        <circle cx="98" cy="8" r="6" fill="#e8f8e8" stroke="#3ca83c" strokeWidth="2" />
        <path d="M111 2h11v6q0 5-5.500 7Q111 13 111 8z" fill="#c84a28" /><path d="M114 5l5 5M119 5l-5 5" stroke="#fff" strokeWidth="1.500" />
      </svg>
      <time className="w-9 text-right text-[10px] text-white">16:44</time>
    </div>
  </footer>
);

export default function App() {
  const [tool, setTool] = useState('pointer');
  const [display, setDisplay] = useState('wire');
  const [size, setSize] = useState('0');
  const [filter, setFilter] = useState('绘图项目和视图');

  return (
    <div className={`relative flex flex-col h-screen overflow-hidden bg-[#ece9d8] text-black ${mono}`}>
      <TitleBar />

      <nav className="flex items-center gap-3 h-6 shrink-0 px-[6px] pt-px bg-linear-to-r from-[#f6f5f2] to-[#ece9d8] border-b border-[#c5c2b0]">
        {menus.map(([label, key]) => (
          <button key={label} type="button" className="flex items-baseline text-xs leading-5 whitespace-nowrap">
            {label}
            <span className="text-[10px]">(<u>{key}</u>)</span>
          </button>
        ))}
      </nav>

      <div className="shrink-0 h-[59px] pt-[1px] bg-linear-to-br from-[#f4f4f4] to-[#e9e6d2] border-b-2 border-[#b3b09e]">
        <div className="flex items-center">
          <span className="w-3 flex justify-center"><Grip /></span>
          {row1.map((group, i) => (
            <div key={i} className="flex items-center">
              {i > 0 && <Grip />}
              {group.map((name) => (
                <ToolButton
                  key={name}
                  name={name}
                  active={name === 'select' || name === display}
                  framed={name === 'spin'}
                  onClick={() => i === 3 && setDisplay(name)}
                />
              ))}
              {i === 1 && (
                <button type="button" aria-label="选取方式" className="flex items-center justify-center w-3.5 h-7"><Caret /></button>
              )}
            </div>
          ))}
        </div>
        <div className="flex items-center">
          <span className="w-3 flex justify-center"><Grip /></span>
          {row2.map((name) => <ToolButton key={name} name={name} />)}
          <Grip />
          <input
            type="number"
            aria-label="数值"
            value={size}
            onChange={(e) => setSize(e.target.value)}
            className="w-8 h-[18px] pl-0.5 text-[10px] text-[#a9a89c] bg-[#ece9d8] border border-r-0 border-[#8fa3c0] [appearance:textfield]"
          />
          <span className="flex flex-col items-center justify-center gap-1 w-[17px] h-[18px] border border-[#8fa3c0]">
            <span className="border-x-[3px] border-x-transparent border-b-[3px] border-b-[#b5b3a4]" />
            <span className="border-x-[3px] border-x-transparent border-t-[3px] border-t-[#b5b3a4]" />
          </span>
          <Grip />
          <ToolButton name="help" />
        </div>
      </div>

      <section className="flex shrink-0 h-[82px] bg-linear-to-br from-[#f5f5f5] to-[#e9e6d2] border-b border-[#c5c2b0]">
        <div className="flex-1 pt-3 pl-2.5 text-xs leading-4">
          <p className="flex items-center gap-1">
            <span className="w-1.5 h-1.5 rounded-full bg-[#0000b8]" />基本窗口不能关闭。
          </p>
          <p className="pl-3">退出进程登录，离开操作系统</p>
          <p className="pl-3">退出进程登录，离开操作系统</p>
        </div>
        <div className="flex flex-col w-4 py-0.5 bg-[#f7f6f2]">
          <button type="button" aria-label="向上滚动" className="flex items-center justify-center w-[15px] h-4 rounded-xs bg-[#c3d3fd] border border-[#9db4e8]">
            <svg viewBox="0 0 10 10" className="w-2.5 h-2.5"><path d="M1 7l4-4 4 4" fill="none" stroke="#35538f" strokeWidth="2" /></svg>
          </button>
          <span className="flex flex-col items-center justify-center gap-px mt-auto w-[15px] h-2 mb-px rounded-xs bg-[#c3d3fd] border border-[#9db4e8]">
            <span className="w-[7px] h-px bg-[#7d9be0]" />
            <span className="w-[7px] h-px bg-[#7d9be0]" />
          </span>
          <button type="button" aria-label="向下滚动" className="flex items-center justify-center w-[15px] h-4 rounded-xs bg-[#c3d3fd] border border-[#9db4e8]">
            <svg viewBox="0 0 10 10" className="w-2.5 h-2.5"><path d="M1 3l4 4 4-4" fill="none" stroke="#35538f" strokeWidth="2" /></svg>
          </button>
        </div>
      </section>

      <main className="flex flex-1 min-h-0 mt-0.5">
        <div className="flex items-center w-3 shrink-0 bg-[#f1f1f4]">
          <Splitter label="展开导航器" place="mb-[50px]" />
          <span className="w-0.5 h-full bg-[#97a4cf]" />
          <Splitter label="展开浏览器" place="mt-[50px]" />
        </div>
        <Drawing />
        <SideBar tool={tool} setTool={setTool} />
      </main>

      <div className="flex items-center h-6 shrink-0 bg-[#ece9d8]">
        <span className="flex-1" />
        <span className="w-[98px] h-full border-l border-[#a5a394]" />
        <div className="relative w-[181px] mr-[38px]">
          <select
            aria-label="过滤器"
            value={filter}
            onChange={(e) => setFilter(e.target.value)}
            className="block w-full h-[18px] pl-1 text-xs leading-4 bg-white border border-[#7f9db9] appearance-none"
          >
            <option>绘图项目和视图</option>
            <option>尺寸</option>
          </select>
          <svg viewBox="0 0 14 14" className="absolute right-0.5 top-0.5 w-3.5 h-3.5 bg-[#c3d3fd] pointer-events-none">
            <path d="M3 5l4 4 4-4" fill="none" stroke="#35538f" strokeWidth="2" />
          </svg>
        </div>
      </div>

      <TaskBar />

      {/* forum stamp over the corner */}
      <div className="absolute right-[5px] bottom-2 w-[152px] pointer-events-none text-center bg-white/25 border-t-[3px] border-[#e05a5a]/60">
        <p className="text-[22px] leading-7 font-black whitespace-nowrap text-[#e03c3c]/60 border-b border-[#7a4a9a]/50">中華設計論壇</p>
        <p className="text-sm leading-[18px] font-bold text-[#006a70]/80">bbs.chinade.net</p>
      </div>
    </div>
  );
}
